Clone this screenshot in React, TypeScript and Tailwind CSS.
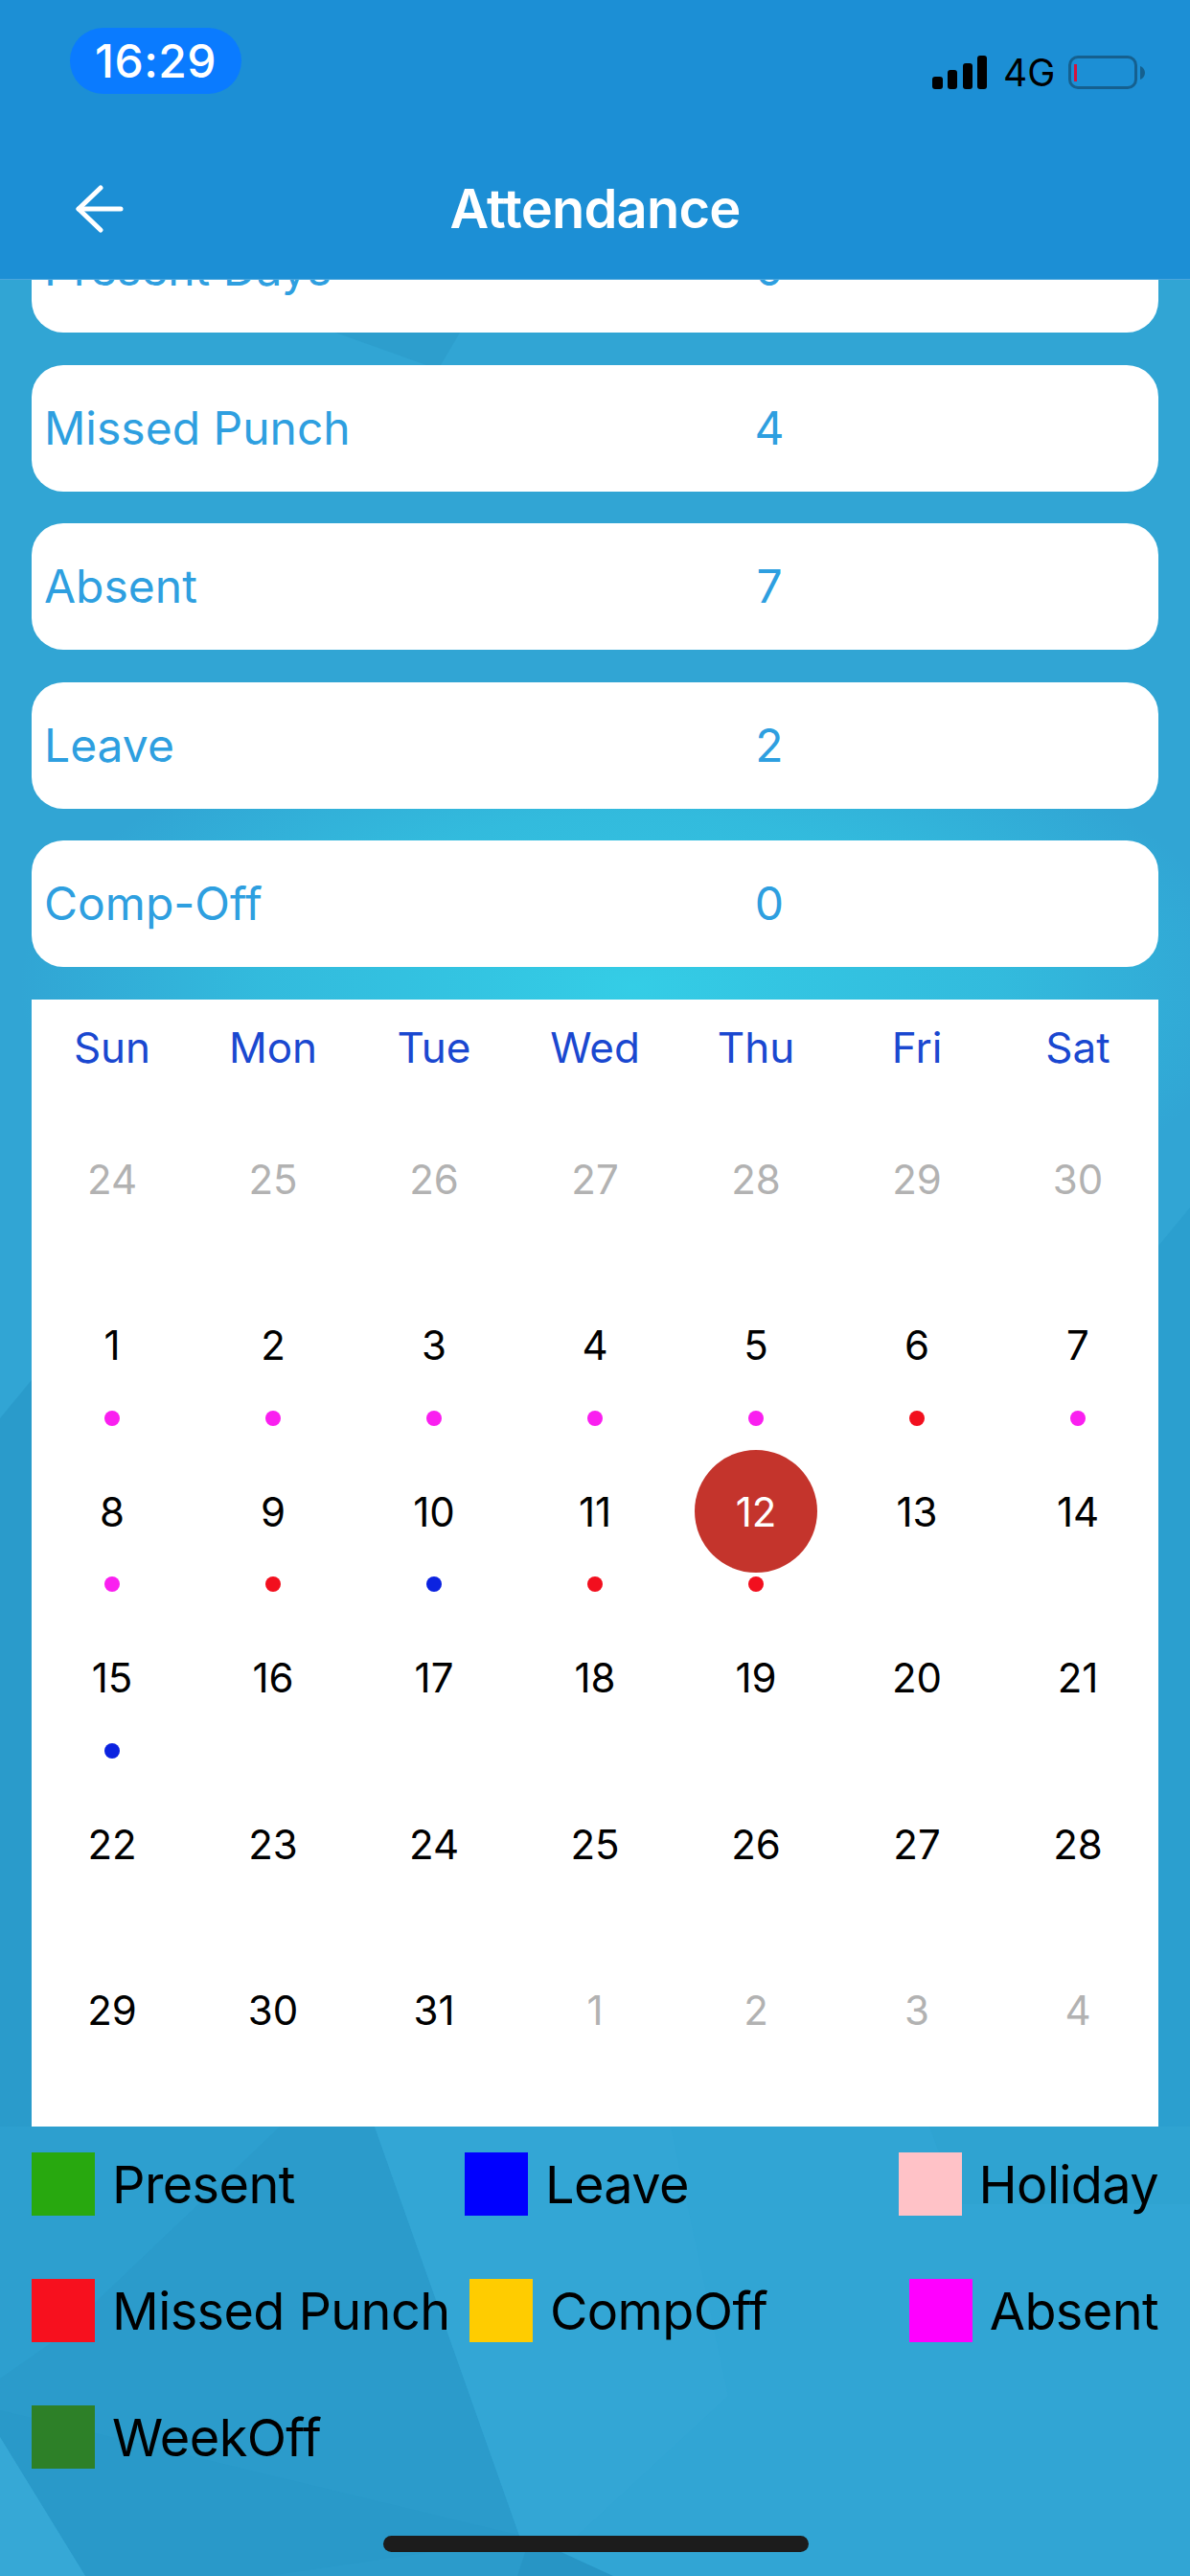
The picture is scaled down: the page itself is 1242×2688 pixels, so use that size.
import React from 'react';

const font = "font-['Inter','Liberation_Sans',sans-serif]";

const summary = [
  { label: 'Present Days', value: '0' },
  { label: 'Missed Punch', value: '4' },
  { label: 'Absent', value: '7' },
  { label: 'Leave', value: '2' },
  { label: 'Comp-Off', value: '0' },
];

const weekDays = ['Sun', 'Mon', 'Tue', 'Wed', 'Thu', 'Fri', 'Sat'];

const MAGENTA = 'bg-[#fa1ff0]';
const RED = 'bg-[#f20f1e]';
const BLUE = 'bg-[#0b22e0]';

const dots: Record<number, string> = {
  1: MAGENTA, 2: MAGENTA, 3: MAGENTA, 4: MAGENTA, 5: MAGENTA, 6: RED, 7: MAGENTA,
  8: MAGENTA, 9: RED, 10: BLUE, 11: RED, 12: RED, 15: BLUE,
};

const days = [
  ...[24, 25, 26, 27, 28, 29, 30].map((d) => ({ d, muted: true })),
  ...Array.from({ length: 31 }, (_, i) => ({ d: i + 1, muted: false })),
  ...[1, 2, 3, 4].map((d) => ({ d, muted: true })),
];

// the first column is wider on the second row, the app doesn't align them
const legendRows = [
  {
    first: 'w-[452px]',
    items: [
      { label: 'Present', color: 'bg-[#28a80f]' },
      { label: 'Leave', color: 'bg-[#0000ff]' },
      { label: 'Holiday', color: 'bg-[#ffc2c7]' },
    ],
  },
  {
    first: 'w-[457px]',
    items: [
      { label: 'Missed Punch', color: 'bg-[#f7101e]' },
      { label: 'CompOff', color: 'bg-[#ffcc00]' },
      { label: 'Absent', color: 'bg-[#ff00ff]' },
    ],
  },
  {
    first: 'w-[452px]',
    items: [{ label: 'WeekOff', color: 'bg-[#2d8028]' }],
  },
];

// low-poly wallpaper behind the content
function Wallpaper() {
  return (
    <svg className="absolute inset-0" width="1242" height="2688" viewBox="0 0 1242 2688">
      <defs>
        <radialGradient id="glow" gradientUnits="userSpaceOnUse" cx="660" cy="1030" r="1" gradientTransform="translate(660 1030) scale(640 300) translate(-660 -1030)">
          <stop offset="0" stopColor="#34cde6" />
          <stop offset="0.6" stopColor="#33c2e0" stopOpacity="0.75" />
          <stop offset="1" stopColor="#33c2e0" stopOpacity="0" />
        </radialGradient>
      </defs>
      <rect width="1242" height="2688" fill="#31a5d4" />
      <polygon points="0,1480 33,1440 33,2219 0,2219" fill="#2a9bcb" />
      <polygon points="1209,1300 1242,1260 1242,2219 1209,2219" fill="#2b9fcf" />
      <rect width="1242" height="2688" fill="url(#glow)" />
      <polygon points="350,347 480,347 460,381 445,381" fill="#2d9ecd" />
      <polygon points="0,2219 391,2219 557,2688 89,2688 0,2543" fill="#2b9bcb" />
      <polygon points="0,2219 292,2219 60,2440 0,2482" fill="#2d9fcf" />
      <polygon points="0,2515 553,2648 280,2688 89,2688 0,2543" fill="#2999c9" />
      <polygon points="391,2219 700,2219 760,2500 557,2688" fill="#33a6d5" />
      <polygon points="0,2543 89,2688 0,2688" fill="#36a8d6" />
      <polygon points="553,2648 640,2688 540,2688" fill="#2795c5" />
      <polygon points="970,2219 1242,2219 1242,2300 1000,2300" fill="#2fa3d1" />
    </svg>
  );
}

function StatusIcons() {
  return (
    <div className="mt-[29px] flex items-center">
      <svg width="57" height="35" viewBox="0 0 57 35" className="text-black">
        <rect x="0" y="22" width="11" height="13" rx="3" fill="currentColor" />
        <rect x="16" y="15" width="10" height="20" rx="3" fill="currentColor" />
        <rect x="32" y="8" width="10" height="27" rx="3" fill="currentColor" />
        <rect x="47" y="0" width="10" height="35" rx="3" fill="currentColor" />
      </svg>
      <span className="ml-[17px] w-[68px] text-[39px] leading-[35px] text-black">4G</span>
      <div className="flex h-[35px] w-[72px] items-center rounded-[10px] border-[3px] border-[#15608f] pl-[3px]">
        <div className="h-[18px] w-[3px] bg-[#d5143c]" />
      </div>
      <svg width="5" height="14" viewBox="0 0 5 14" className="ml-[3px]">
        <path d="M0 0 C3 1 5 4 5 7 C5 10 3 13 0 14 Z" fill="#15608f" />
      </svg>
    </div>
  );
}

function Header() {
  return (
    <header className="relative z-10 h-[292px] border-b border-[#4ba6dc] bg-[#1c8fd5]">
      <div className="flex items-start justify-between pl-[73px] pr-[47px] pt-[29px]">
        <div className="flex h-[69px] w-[179px] items-center justify-center rounded-full bg-[#0a7bff] text-[48px] font-medium tracking-[0.5px] text-white">
          16:29
        </div>
        <StatusIcons />
      </div>
      <div className="mt-[74px] grid h-[92px] grid-cols-[1fr_auto_1fr] items-center pl-[79px]">
        <svg width="50" height="50" viewBox="0 0 50 50" fill="none" stroke="white" strokeWidth="5" strokeLinecap="round" strokeLinejoin="round">
          <path d="M3 25H47" />
          <path d="M26 3L3 25L26 47" />
        </svg>
        <h1 className="mr-[79px] text-[56px] font-semibold tracking-[-0.8px] text-white">Attendance</h1>
      </div>
    </header>
  );
}

function SummaryCard({ label, value }: { label: string; value: string }) {
  return (
    <div className="grid h-[132px] grid-cols-[737px_40px] items-center rounded-[33px] bg-white pl-[13px] text-[48px] text-[#2e9fe0]">
      <span>{label}</span>
      <span className="text-center">{value}</span>
    </div>
  );
}

function Calendar() {
  return (
    <section className="mx-[33px] mt-[34px] bg-white pb-[12px]">
      <div className="grid h-[99px] grid-cols-7 items-center">
        {weekDays.map((w) => (
          <div key={w} className="text-center text-[44px] text-[#1a48d0]">
            {w}
          </div>
        ))}
      </div>
      <div className="mt-[24px] grid auto-rows-[173.5px] grid-cols-7">
        {days.map((day, i) => {
          const isToday = !day.muted && day.d === 12;
          const dot = day.muted ? undefined : dots[day.d];
          return (
            <div key={i} className="flex flex-col items-center">
              <div
                className={`flex h-[128px] w-[128px] items-center justify-center rounded-full text-[42px] ${
                  isToday ? 'bg-[#c4342c] text-white' : day.muted ? 'text-[#b2b2b2]' : 'text-black'
                }`}
              >
                {day.d}
              </div>
              {dot && <div className={`mt-[4px] h-[16px] w-[16px] rounded-full ${dot}`} />}
            </div>
          );
        })}
      </div>
    </section>
  );
}

function LegendItem({ label, color, className }: { label: string; color: string; className?: string }) {
  return (
    <div className={`flex items-center gap-[18px] ${className ?? ''}`}>
      <div className={`h-[66px] w-[66px] ${color}`} />
      <span className="pt-[2px] text-[54px] leading-[64px] tracking-[-0.6px] text-black">{label}</span>
    </div>
  );
}

function Legend() {
  return (
    <section className="mt-[27px] flex flex-col gap-[66px] px-[33px]">
      {legendRows.map((row, i) => (
        <div key={i} className="flex h-[66px]">
          {row.items.map((item, j) => (
            <LegendItem
              key={item.label}
              label={item.label}
              color={item.color}
              className={j === 0 ? row.first : j === 2 ? 'ml-auto' : ''}
            />
          ))}
        </div>
      ))}
    </section>
  );
}

export default function App() {
  return (
    <div className={`relative h-[2688px] w-[1242px] overflow-hidden ${font}`}>
      <Wallpaper />
      <Header />
      <main className="relative mt-[-77px]">
        <div className="mx-[33px] flex flex-col gap-[33.5px]">
          {summary.map((row) => (
            <SummaryCard key={row.label} label={row.label} value={row.value} />
          ))}
        </div>
        <Calendar />
        <Legend />
      </main>
      <div className="absolute left-[400px] top-[2646px] h-[17px] w-[444px] rounded-full bg-[#1c1c1c]" />
    </div>
  );
}
